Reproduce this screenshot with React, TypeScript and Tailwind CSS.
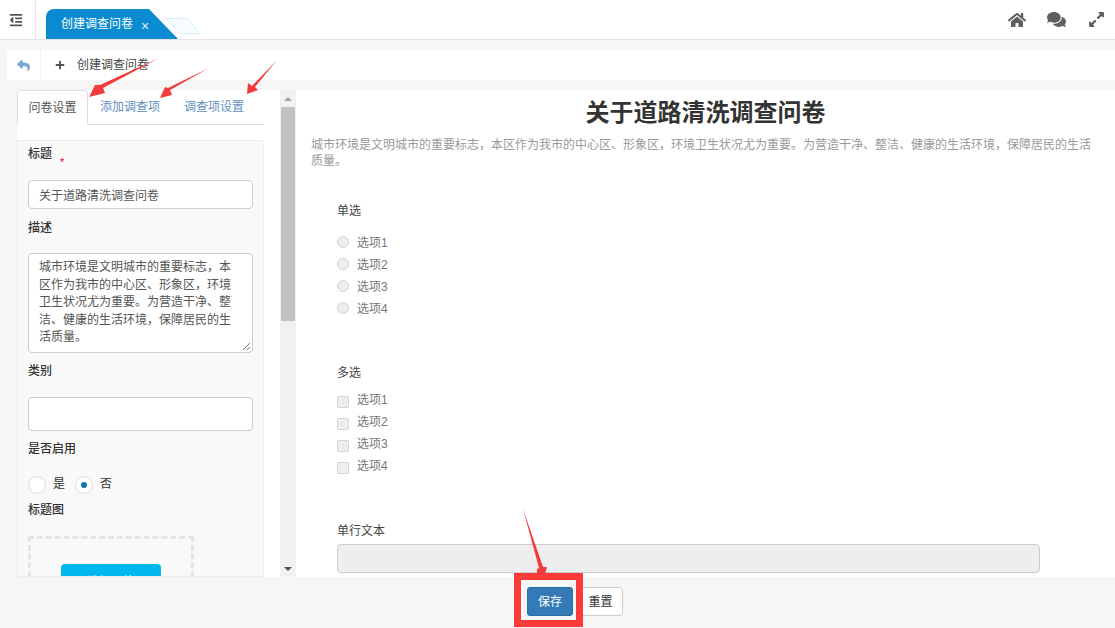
import React from 'react';
import { FaHome, FaComments, FaExpandAlt, FaOutdent, FaReply, FaPlus } from 'react-icons/fa';

const font = 'font-["Liberation_Sans","Noto_Sans_CJK_SC",sans-serif]';

const Label = ({ text, className = '' }: { text: string; className?: string }) => (
  <div className={`text-[12px] leading-[16px] font-medium text-[#333] ${className}`}>{text}</div>
);

const Option = ({ text, square }: { text: string; square?: boolean }) => (
  <div className="flex items-center h-[22px] text-[12px] text-[#777]">
    <span
      className={`w-[12px] h-[12px] mr-[8px] border border-[#d4d4d4] bg-[#eee] ${square ? 'rounded-[2px] mt-[4px]' : 'rounded-full -mt-[2px]'}`}
    />
    {text}
  </div>
);

const Arrows = () => (
  <svg className="absolute left-0 top-0 pointer-events-none" width="1115" height="628">
    <g fill="#f33b3b">
      <polygon points="159,58 103,88 105,93 89,97 95,85 100,85" />
      <polygon points="209,68 170,90 172,95 160,98 165,87 168,88" />
      <polygon points="277,60 255,87 258,90 247,94 248,83 252,86" />
      <polygon points="523,509 543,567 547,567 545,574 537,574 537,569 539,568" />
    </g>
  </svg>
);

export default function App() {
  return (
    <div className={`relative w-full h-[628px] overflow-hidden flex flex-col bg-[#f6f6f6] ${font}`}>
      {/* 顶部标签栏 */}
      <div className="h-[40px] shrink-0 flex bg-white border-b border-[#e5e5e5]">
        <div className="w-[36px] border-r border-[#e5e5e5] flex items-center justify-center pr-[4px] text-[#555]">
          <FaOutdent size={14} />
        </div>
        <div className="flex items-end ml-[10px]">
          <div className="h-[30px] w-[132px] bg-[#0a8bd0] rounded-tl-[8px] flex items-center pl-[15px] text-[12px] text-white [clip-path:polygon(0_0,78%_0,100%_100%,0_100%)]">
            创建调查问卷
            <span className="ml-[8px] mt-[4px] text-[14px] font-light text-[#dff1fb]">×</span>
          </div>
          <div className="h-[16px] w-[22px] -ml-[6px] mb-[5px] skew-x-[40deg] rounded-[2px] border border-[#d4eefb] bg-[#f7fcff]" />
        </div>
        <div className="ml-auto flex items-center text-[#5f5f5f]">
          <FaHome size={18} className="mr-[21px]" />
          <FaComments size={19} className="mr-[22px]" />
          <FaExpandAlt size={17} className="mr-[10px]" />
        </div>
      </div>

      {/* 工具栏 */}
      <div className="h-[30px] shrink-0 mt-[10px] ml-[7px] bg-white flex items-center text-[12px] text-[#444]">
        <div className="w-[34px] h-full border-r border-[#f2f2f2] flex items-center justify-center text-[#7ba6d0]">
          <FaReply size={13} />
        </div>
        <FaPlus size={10} className="ml-[14px] mr-[12px] text-[#555]" />
        创建调查问卷
      </div>

      {/* 主体 */}
      <div className="h-[487px] shrink-0 mt-[10px] flex overflow-hidden">
        <div className="ml-[17px] w-[263px] bg-white overflow-hidden">
          <div className="w-[247px] h-[35px] flex border-b border-[#ddd] text-[12px]">
            <div className="w-[71px] h-[35px] border border-[#ddd] border-b-white rounded-t-[4px] bg-white text-[#555] flex items-center justify-center">
              问卷设置
            </div>
            <div className="w-[84px] flex items-center justify-center text-[#5f8fbe]">添加调查项</div>
            <div className="w-[84px] flex items-center justify-center text-[#5f8fbe]">调查项设置</div>
          </div>
          <div className="w-[247px] h-[437px] mt-[15px] px-[10px] pt-[5px] bg-[#f9f9f9] border border-[#eee] overflow-hidden">
            <div className="flex">
              <Label text="标题" />
              <span className="ml-[8px] mt-[8px] text-[11px] leading-[16px] text-[#e4002b]">*</span>
            </div>
            <div className="mt-[10px] h-[29px] w-[225px] bg-white border border-[#ccc] rounded-[4px] flex items-center px-[10px] pt-[2px] text-[12px] text-[#555]">
              关于道路清洗调查问卷
            </div>
            <Label text="描述" className="mt-[11px]" />
            <div className="relative mt-[17px] h-[100px] w-[225px] bg-white border border-[#ccc] rounded-[4px] px-[10px] pt-[5px] pb-[3px] text-[12px] leading-[17.5px] text-[#555]">
              城市环境是文明城市的重要标志，本区作为我市的中心区、形象区，环境卫生状况尤为重要。为营造干净、整洁、健康的生活环境，保障居民的生活质量。
              <svg className="absolute right-[1px] bottom-[1px]" width="9" height="9">
                <path d="M1 8 L8 1 M5 8 L8 5" stroke="#777" strokeWidth="1" />
              </svg>
            </div>
            <Label text="类别" className="mt-[10px]" />
            <div className="mt-[18px] h-[34px] w-[225px] bg-white border border-[#ccc] rounded-[4px]" />
            <Label text="是否启用" className="mt-[10px]" />
            <div className="mt-[19px] h-[18px] flex items-center text-[12px] text-[#333]">
              <span className="w-[18px] h-[18px] rounded-full border border-[#ddd] bg-white" />
              <span className="ml-[7px] -mt-[2px]">是</span>
              <span className="ml-[10px] w-[18px] h-[18px] rounded-full border border-[#ddd] bg-white flex items-center justify-center">
                <span className="w-[6px] h-[6px] rounded-full bg-[#0b76ac]" />
              </span>
              <span className="ml-[7px] -mt-[2px]">否</span>
            </div>
            <Label text="标题图" className="mt-[8px]" />
            <div className="mt-[18px] w-[166px] h-[120px] border-[3px] border-dashed border-[#e5e5e5] pt-[25px]">
              <div className="mx-auto w-[100px] h-[40px] rounded-[4px] bg-[#00b7ee] text-white text-[12px] leading-[36px] text-center">
                选择图片
              </div>
            </div>
          </div>
        </div>

        {/* 滚动条 */}
        <div className="w-[16px] h-full shrink-0 bg-[#f1f1f1] flex flex-col items-center">
          <div className="h-[17px] w-full flex items-center justify-center">
            <span className="w-0 h-0 border-x-[4px] border-x-transparent border-b-[4px] border-b-[#a3a3a3]" />
          </div>
          <div className="w-[14px] h-[214px] bg-[#c1c1c1]" />
          <div className="mt-auto h-[17px] w-full flex items-center justify-center">
            <span className="w-0 h-0 border-x-[4px] border-x-transparent border-t-[4px] border-t-[#505050]" />
          </div>
        </div>

        {/* 问卷预览 */}
        <div className="flex-1 bg-white overflow-hidden px-[15px]">
          <h1 className="mt-[8px] h-[30px] text-[24px] leading-[30px] font-bold text-[#333] text-center">
            关于道路清洗调查问卷
          </h1>
          <p className="mt-[9px] w-[788px] text-[12px] leading-[16px] text-[#999]">
            城市环境是文明城市的重要标志，本区作为我市的中心区、形象区，环境卫生状况尤为重要。为营造干净、整洁、健康的生活环境，保障居民的生活质量。
          </p>
          <div className="ml-[26px]">
            <div className="mt-[34px] text-[12px] leading-[16px] text-[#444]">单选</div>
            <div className="mt-[13px]">
              {['选项1', '选项2', '选项3', '选项4'].map((item) => (
                <Option key={item} text={item} />
              ))}
            </div>
            <div className="mt-[45px] text-[12px] leading-[16px] text-[#444]">多选</div>
            <div className="mt-[8px]">
              {['选项1', '选项2', '选项3', '选项4'].map((item) => (
                <Option key={item} text={item} square />
              ))}
            </div>
            <div className="mt-[46px] text-[12px] leading-[16px] text-[#444]">单行文本</div>
            <div className="mt-[5px] h-[29px] w-[703px] rounded-[4px] border border-[#ccc] bg-[#eee]" />
          </div>
        </div>
      </div>

      {/* 底部按钮 */}
      <div className="flex-1 flex items-start justify-center pt-[10px] pl-[35px]">
        <div className="relative flex">
          <button className="w-[46px] h-[29px] rounded-[3px] bg-[#337ab7] border border-[#2e6da4] text-white text-[12px]">保存</button>
          <button className="w-[46px] h-[29px] rounded-[4px] bg-white border border-[#ccc] text-[#333] text-[12px] ml-[4px] pl-[1px]">重置</button>
          <div className="absolute -left-[13px] -top-[14px] w-[69px] h-[54px] border-[7px] border-[#fb3a3a]" />
        </div>
      </div>

      <Arrows />
    </div>
  );
}
